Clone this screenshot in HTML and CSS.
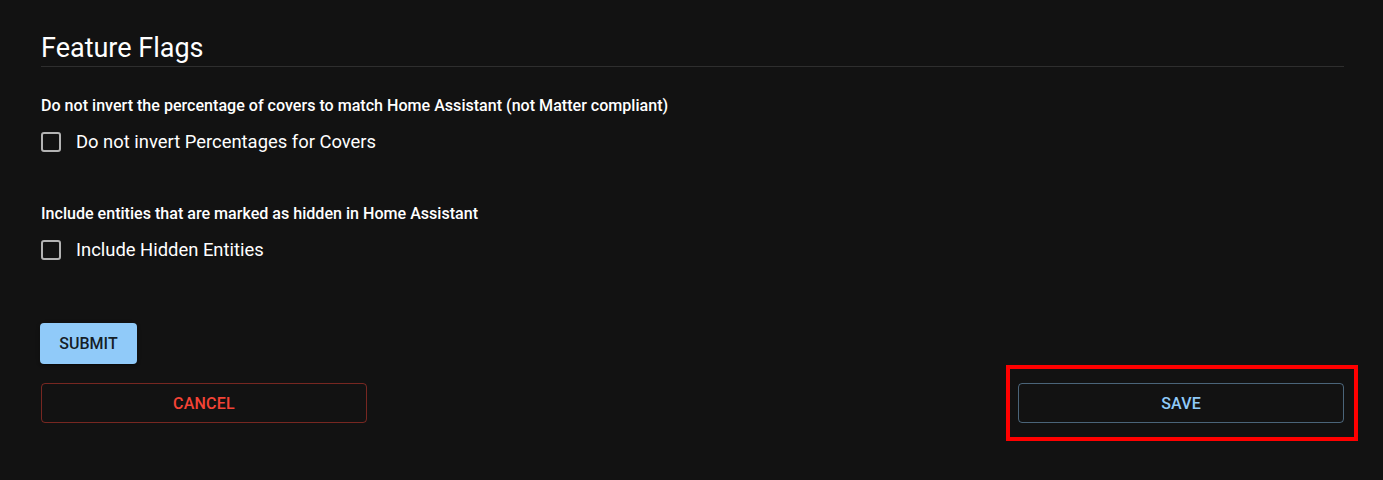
FILE: index.html
```html
<!DOCTYPE html>
<html lang="en">
<head>
<meta charset="utf-8">
<title>Feature Flags</title>
<link rel="stylesheet" href="styles.css">
</head>
<body>
<main class="page">
  <h2 class="title">Feature Flags</h2>
  <section class="group first">
    <p class="helper">Do not invert the percentage of covers to match Home Assistant (not Matter compliant)</p>
    <label class="check-row"><span class="box"></span><span class="label">Do not invert Percentages for Covers</span></label>
  </section>
  <section class="group second">
    <p class="helper">Include entities that are marked as hidden in Home Assistant</p>
    <label class="check-row"><span class="box"></span><span class="label">Include Hidden Entities</span></label>
  </section>
  <div class="submit-row">
    <button class="btn-submit">Submit</button>
  </div>
  <div class="actions">
    <button class="btn-outline cancel">Cancel</button>
    <div class="save-wrap">
      <button class="btn-outline save">Save</button>
      <span class="highlight"></span>
    </div>
  </div>
</main>
</body>
</html>
```

FILE: styles.css
```css
html, body {
  margin: 0;
  padding: 0;
  background: #121212;
}
body {
  font-family: Roboto, "Liberation Sans", sans-serif;
  color: #ffffff;
  min-height: 480px;
}
.page {
  width: 1303px;
  padding: 30px 0 60px 41px;
}
.title {
  margin: 0;
  font-size: 27px;
  font-weight: 400;
  line-height: 36px;
  border-bottom: 1px solid #2e2e2e;
}
.group.first {
  margin-top: 26.5px;
}
.group.second {
  margin-top: 39px;
}
.helper {
  margin: 0 0 3px;
  font-size: 16.08px;
  font-weight: 500;
  line-height: 24px;
  color: #ffffff;
}
.check-row {
  display: flex;
  align-items: center;
  height: 42px;
  gap: 15px;
}
.box {
  box-sizing: border-box;
  width: 20px;
  height: 20px;
  border: 2px solid #b3b3b3;
  border-radius: 3px;
}
.label {
  font-size: 18.4px;
  line-height: 24px;
  color: #ffffff;
}
.submit-row {
  margin-top: 52.5px;
  margin-left: -1px;
  height: 41px;
}
.btn-submit {
  height: 41px;
  width: 97px;
  border: none;
  border-radius: 4px;
  background: #90caf9;
  color: rgba(0, 0, 0, 0.87);
  font-family: inherit;
  font-size: 16px;
  font-weight: 500;
  text-transform: uppercase;
  box-shadow: 0 3px 1px -2px rgba(0,0,0,0.2), 0 2px 2px 0 rgba(0,0,0,0.14), 0 1px 5px 0 rgba(0,0,0,0.12);
  padding: 0;
  display: block;
}
.actions {
  margin-top: 19px;
  display: grid;
  grid-template-columns: repeat(4, 1fr);
}
.btn-outline {
  box-sizing: border-box;
  display: block;
  width: 100%;
  height: 40px;
  background: transparent;
  border-radius: 4px;
  font-family: inherit;
  font-size: 16px;
  font-weight: 500;
  letter-spacing: 0.2px;
  text-transform: uppercase;
  padding: 0;
}
.cancel {
  grid-column: 1;
  border: 1px solid rgba(244, 67, 54, 0.45);
  color: #f44336;
}
.save-wrap {
  grid-column: 4;
  position: relative;
}
.save {
  border: 1px solid rgba(144, 202, 249, 0.45);
  color: #90caf9;
}
.highlight {
  position: absolute;
  left: -12px;
  right: -14px;
  top: -18px;
  bottom: -18px;
  border: 4px solid #ff0000;
  pointer-events: none;
}
```
